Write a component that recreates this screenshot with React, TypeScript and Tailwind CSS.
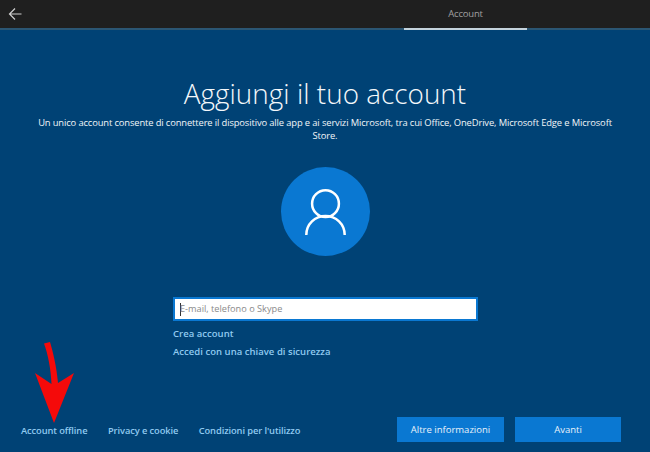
export default function App() {
  return (
    <div className="relative flex h-[452px] w-[650px] flex-col overflow-hidden bg-[#004275] font-['Open_Sans',sans-serif] text-white">
      <header className="flex h-[30px] shrink-0 border-b-2 border-[#2b5673] bg-[#1f1f1f]">
        <div className="flex w-[404px] items-center pl-[8px]">
          <svg width="14" height="14" viewBox="0 0 14 14" fill="none" stroke="#d0d0d0" strokeWidth="1.2">
            <path d="M13.500 7H1.500M7 1.500 1.500 7 7 12.500" />
          </svg>
        </div>
        <div className="-mb-[2px] flex w-[123px] items-center justify-center border-b-2 border-[#c4d3dd] pt-[1px] text-[9.5px] tracking-[-0.2px] text-[#a0a0a0]">
          Account
        </div>
      </header>

      <main className="flex flex-1 flex-col items-center">
        <h1 className="mt-[43px] text-[27.800px] leading-[40px] font-light tracking-[0.05px] text-[#f4f8fb]">Aggiungi il tuo account</h1>
        <p className="mt-[3px] w-[590px] text-center text-[9.4px] leading-[13px] tracking-[-0.13px] text-[#f0f5f8]">
          Un unico account consente di connettere il dispositivo alle app e ai servizi Microsoft, tra cui Office, OneDrive, Microsoft Edge e Microsoft Store.
        </p>
        <div className="mt-[25px] flex h-[89px] w-[89px] items-center justify-center rounded-full bg-[#0a78d2]">
          <svg width="41" height="46" viewBox="0 0 41 46" fill="none" stroke="white" strokeWidth="2.5">
            <circle cx="20.5" cy="14.700" r="13.400" />
            <path d="M1.300 46C1.300 35 10 27 20.500 27S39.700 35 39.700 46" />
          </svg>
        </div>
        <div className="mt-[41px] ml-[1px] flex w-[305px] flex-col">
          <div className="flex h-[24px] items-center border-2 border-[#0a78d2] bg-white pl-[5px] text-[9.2px] text-[#8a8a8a]">
            <span className="mr-[-1px] h-[13px] w-px bg-[#333]" />
            E-mail, telefono o Skype
          </div>
          <a className="mt-[6px] text-[9.5px] leading-[14px] font-semibold tracking-[0.03px] text-[#90caf0]">Crea account</a>
          <a className="mt-[4px] text-[9.5px] leading-[14px] font-semibold tracking-[0.03px] text-[#90caf0]">Accedi con una chiave di sicurezza</a>
        </div>
      </main>

      <footer className="flex h-[35px] shrink-0 items-start justify-between pr-[29px] pl-[21px]">
        <nav className="flex h-[27px] items-center gap-[20.500px] text-[9.3px] font-semibold tracking-[-0.09px] text-[#90caf0]">
          <a>Account offline</a>
          <a>Privacy e cookie</a>
          <a>Condizioni per l'utilizzo</a>
        </nav>
        <div className="flex gap-[11px] text-[9.5px] text-[#e8f2fa]">
          <button className="h-[25px] w-[107px] bg-[#0a78d2] pt-[2px]">Altre informazioni</button>
          <button className="h-[25px] w-[106px] bg-[#0a78d2] pt-[2px]">Avanti</button>
        </div>
      </footer>

      <svg className="absolute top-[342px] left-[34px]" width="42" height="82" viewBox="0 0 42 82" fill="#f50a0a">
        <path d="M10 1.500 16 0C19 10 22.500 24 24 41L40 31 20 81 1 31 17.500 42C17 28 14 12 10 1.500Z" />
      </svg>
    </div>
  );
}
